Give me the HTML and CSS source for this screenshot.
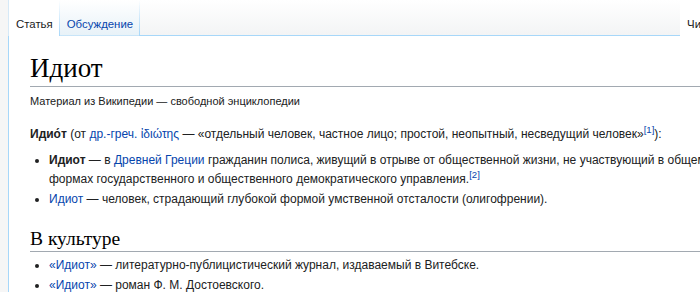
FILE: index.html
```html
<html lang="ru">
  <head>
    <meta charset="UTF-8" />
    <meta name="viewport" content="width=device-width, initial-scale=1.0" />
    <title>Идиот — Википедия</title>
    <link rel="stylesheet" href="styles.css">
  </head>
  <body>
    <div class="page">
      <div class="header">
        <div class="tabs">
          <a class="tab selected" href="#">Статья</a>
          <a class="tab" href="#">Обсуждение</a>
        </div>
        <div class="spacer"></div>
        <div class="tabs">
          <a class="tab selected" href="#">Читать</a>
          <a class="tab" href="#">Править</a>
          <a class="tab" href="#">История</a>
        </div>
      </div>
      <div class="content">
        <h1 class="first-heading">Идиот</h1>
        <div class="site-sub">Материал из Википедии — свободной энциклопедии</div>
        <p><b>Идио́т</b> (от <a href="#">др.-греч.</a> <a href="#" class="greek">ἰδιώτης</a> — «отдельный человек, частное лицо; простой, неопытный, несведущий человек»<sup><a href="#">[1]</a></sup>):</p>
        <ul>
          <li><b>Идиот</b> — в <a href="#">Древней Греции</a> гражданин полиса, живущий в отрыве от общественной жизни, не участвующий в общем собрании и других формах государственного и общественного демократического управления.<sup><a href="#">[2]</a></sup></li>
          <li><a href="#">Идиот</a> — человек, страдающий глубокой формой умственной отсталости (олигофрении).</li>
        </ul>
        <h2>В культуре</h2>
        <ul>
          <li><a href="#">«Идиот»</a> — литературно-публицистический журнал, издаваемый в Витебске.</li>
          <li><a href="#">«Идиот»</a> — роман Ф. М. Достоевского.</li>
        </ul>
      </div>
    </div>
  </body>
</html>
```

FILE: styles.css
```css
body {
  margin: 0;
  background: #f6f6f6;
  font-family: "Liberation Sans", Arial, sans-serif;
  color: #202122;
  overflow: hidden;
}

.page {
  margin-left: 8px;
  width: 838px;
}

.header {
  display: flex;
  height: 36px;
}

.tabs {
  display: flex;
  flex-shrink: 0;
}

.tab {
  display: flex;
  align-items: flex-end;
  padding: 0 7px 6px 7px;
  font-size: 11.4px;
  color: #0645ad;
  text-decoration: none;
  white-space: nowrap;
  background:
    linear-gradient(to bottom, rgba(167, 215, 249, 0) 0, #a7d7f9 100%) right / 1px 100% no-repeat,
    linear-gradient(to top, #a7d7f9 0, #e8f2f8 1px, #fff 100%);
}

.tabs:first-child .tab:first-child {
  border-left: 1px solid #d6e9f7;
}

.tab.selected {
  color: #202122;
  background:
    linear-gradient(to bottom, rgba(167, 215, 249, 0) 0, #a7d7f9 100%) right / 1px 100% no-repeat,
    #fff;
}

.spacer {
  flex: 0 0 540px;
  background: linear-gradient(to bottom, #fff 0, #f3f4f5 100%);
  border-bottom: 1px solid #a7d7f9;
  box-sizing: border-box;
}

.content {
  background: #fff;
  border-left: 1px solid #a7d7f9;
  padding: 15px 21px 24px 21px;
  font-size: 12px;
  line-height: 19px;
}

.content a {
  color: #0645ad;
  text-decoration: none;
}

.first-heading {
  font-family: "Liberation Serif", Georgia, serif;
  font-size: 27px;
  font-weight: normal;
  line-height: 1.3;
  color: #000;
  margin: 0 0 4px 0;
  border-bottom: 1px solid #a2a9b1;
}

.site-sub {
  font-size: 11px;
  line-height: 20px;
  color: #202122;
  margin-bottom: 14px;
}

p {
  margin: 0 0 7px 0;
}

sup {
  font-size: 80%;
  line-height: 1;
}

ul {
  margin: 0 0 0 19px;
  padding: 0;
  list-style: disc;
}

li {
  margin-bottom: 1px;
}

h2 {
  font-family: "Liberation Serif", Georgia, serif;
  font-size: 19.5px;
  font-weight: normal;
  line-height: 1.3;
  color: #000;
  margin: 17px 0 4px 0;
  border-bottom: 1px solid #a2a9b1;
}
```
